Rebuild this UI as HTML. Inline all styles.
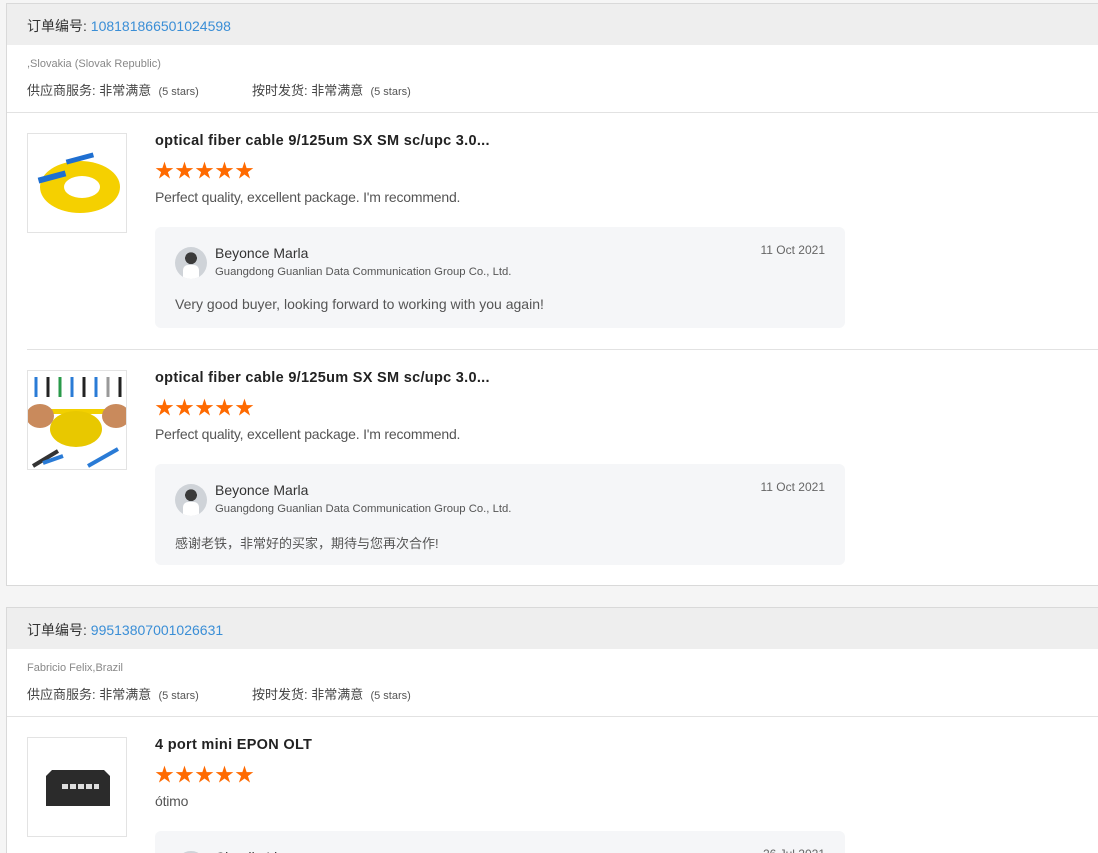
<!DOCTYPE html>
<html style="width:1098px;height:853px;overflow:hidden"><head><meta charset="utf-8"><style>
*{margin:0;padding:0;box-sizing:border-box}
body{width:1098px;height:853px;overflow:hidden;background:#f5f5f5;font-family:"Liberation Sans","Noto Sans CJK SC",sans-serif;position:relative;color:#333}
.a{position:absolute;white-space:nowrap}
.card{position:absolute;left:6px;width:1100px;background:#fff;border:1px solid #d9d9d9}
.hd{position:absolute;left:0;top:0;right:0;height:41px;background:#eeeeee;font-size:14px;color:#333;padding:12px 0 0 20px}
.hd span{color:#3a8ed6}
.line{position:absolute;height:1px;background:#e2e2e2}
.img{position:absolute;width:100px;height:100px;border:1px solid #e3e3e3;background:#fff;overflow:hidden}
.t{font-size:14.5px;font-weight:bold;color:#222;letter-spacing:0.3px}
.stars{font-size:19px;color:#ff6a00;letter-spacing:1px;line-height:1}
.txt{font-size:14px;color:#555;letter-spacing:-0.2px}
.reply{position:absolute;left:155px;width:690px;height:101px;background:#f5f6f8;border-radius:6px;overflow:hidden}
.av{position:absolute;left:20px;top:20px;width:32px;height:32px;border-radius:50%;background:radial-gradient(circle at 50% 35%,#3a3a3a 0 22%,#cfd3d8 23%);overflow:hidden}
.av:after{content:"";position:absolute;left:8px;top:18px;width:16px;height:16px;background:#fff;border-radius:5px 5px 0 0}
.nm{position:absolute;left:60px;top:18px;font-size:14px;color:#333}
.co{position:absolute;left:60px;top:39px;font-size:11.3px;color:#555}
.dt{position:absolute;right:20px;top:16px;font-size:12px;color:#666}
.rt{position:absolute;left:20px;top:69px;font-size:14px;color:#555}
.sm{font-size:11px;color:#555}
</style></head><body>

<div class="card" style="top:3px;height:583px">
  <div class="hd">订单编号: <span>108181866501024598</span></div>
  <div class="a" style="left:20px;top:54px;font-size:11px;color:#888">,Slovakia (Slovak Republic)</div>
  <div class="a" style="left:20px;top:76px;font-size:13px;color:#444">供应商服务: 非常满意 &nbsp;<span class="sm">(5 stars)</span></div>
  <div class="a" style="left:245px;top:76px;font-size:13px;color:#444">按时发货: 非常满意 &nbsp;<span class="sm">(5 stars)</span></div>
  <div class="line" style="left:0;right:0;top:108px"></div>
  <div class="line" style="left:20px;right:0;top:345px"></div>
</div>

<!-- item 1 -->
<div class="img" style="left:27px;top:133px">
<svg width="100" height="100" viewBox="0 0 100 100"><ellipse cx="52" cy="53" rx="40" ry="26" fill="#f5d000"/><ellipse cx="54" cy="53" rx="18" ry="11" fill="#fff"/><rect x="10" y="40" width="28" height="6" fill="#1f6fd1" transform="rotate(-15 24 43)"/><rect x="38" y="22" width="28" height="5" fill="#1f6fd1" transform="rotate(-15 52 25)"/></svg></div>
<div class="a t" style="left:155px;top:133px">optical fiber cable 9/125um SX SM sc/upc 3.0...</div>
<div class="a stars" style="left:155px;top:162px">★★★★★</div>
<div class="a txt" style="left:155px;top:189px">Perfect quality, excellent package. I'm recommend.</div>
<div class="reply" style="top:227px"><div class="av"></div><div class="nm">Beyonce Marla</div><div class="co">Guangdong Guanlian Data Communication Group Co., Ltd.</div><div class="dt">11 Oct 2021</div><div class="rt">Very good buyer, looking forward to working with you again!</div></div>

<!-- item 2 -->
<div class="img" style="left:27px;top:370px">
<svg width="100" height="100" viewBox="0 0 100 100"><g stroke-width="3"><line x1="8" y1="6" x2="8" y2="26" stroke="#2a7bd6"/><line x1="20" y1="6" x2="20" y2="26" stroke="#222"/><line x1="32" y1="6" x2="32" y2="26" stroke="#2a9a4a"/><line x1="44" y1="6" x2="44" y2="26" stroke="#2a7bd6"/><line x1="56" y1="6" x2="56" y2="26" stroke="#222"/><line x1="68" y1="6" x2="68" y2="26" stroke="#2a7bd6"/><line x1="80" y1="6" x2="80" y2="26" stroke="#999"/><line x1="92" y1="6" x2="92" y2="26" stroke="#222"/></g><rect x="20" y="38" width="62" height="5" fill="#f2d000"/><ellipse cx="48" cy="58" rx="26" ry="18" fill="#e8c800"/><ellipse cx="12" cy="45" rx="14" ry="12" fill="#c98a5c"/><ellipse cx="88" cy="45" rx="14" ry="12" fill="#c98a5c"/><g stroke-width="4"><line x1="5" y1="95" x2="30" y2="80" stroke="#333"/><line x1="60" y1="95" x2="90" y2="78" stroke="#2a7bd6"/><line x1="15" y1="92" x2="35" y2="85" stroke="#2a7bd6"/></g></svg></div>
<div class="a t" style="left:155px;top:370px">optical fiber cable 9/125um SX SM sc/upc 3.0...</div>
<div class="a stars" style="left:155px;top:399px">★★★★★</div>
<div class="a txt" style="left:155px;top:426px">Perfect quality, excellent package. I'm recommend.</div>
<div class="reply" style="top:464px"><div class="av"></div><div class="nm">Beyonce Marla</div><div class="co">Guangdong Guanlian Data Communication Group Co., Ltd.</div><div class="dt">11 Oct 2021</div><div class="rt" style="font-size:13px">感谢老铁，非常好的买家，期待与您再次合作!</div></div>

<div class="card" style="top:607px;height:300px">
  <div class="hd">订单编号: <span>99513807001026631</span></div>
  <div class="a" style="left:20px;top:54px;font-size:11px;color:#888">Fabricio Felix,Brazil</div>
  <div class="a" style="left:20px;top:76px;font-size:13px;color:#444">供应商服务: 非常满意 &nbsp;<span class="sm">(5 stars)</span></div>
  <div class="a" style="left:245px;top:76px;font-size:13px;color:#444">按时发货: 非常满意 &nbsp;<span class="sm">(5 stars)</span></div>
  <div class="line" style="left:0;right:0;top:108px"></div>
</div>

<div class="img" style="left:27px;top:737px">
<svg width="100" height="100" viewBox="0 0 100 100"><path d="M18 38 L24 32 L76 32 L82 38 L82 68 L18 68Z" fill="#2b2b2b"/><g fill="#ddd"><rect x="34" y="46" width="6" height="5"/><rect x="42" y="46" width="6" height="5"/><rect x="50" y="46" width="6" height="5"/><rect x="58" y="46" width="6" height="5"/><rect x="66" y="46" width="5" height="5"/></g></svg></div>
<div class="a t" style="left:155px;top:737px">4 port mini EPON OLT</div>
<div class="a stars" style="left:155px;top:766px">★★★★★</div>
<div class="a txt" style="left:155px;top:793px">ótimo</div>
<div class="reply" style="top:831px"><div class="av"></div><div class="nm">Claudio Lima</div><div class="dt">26 Jul 2021</div></div>

</body></html>
